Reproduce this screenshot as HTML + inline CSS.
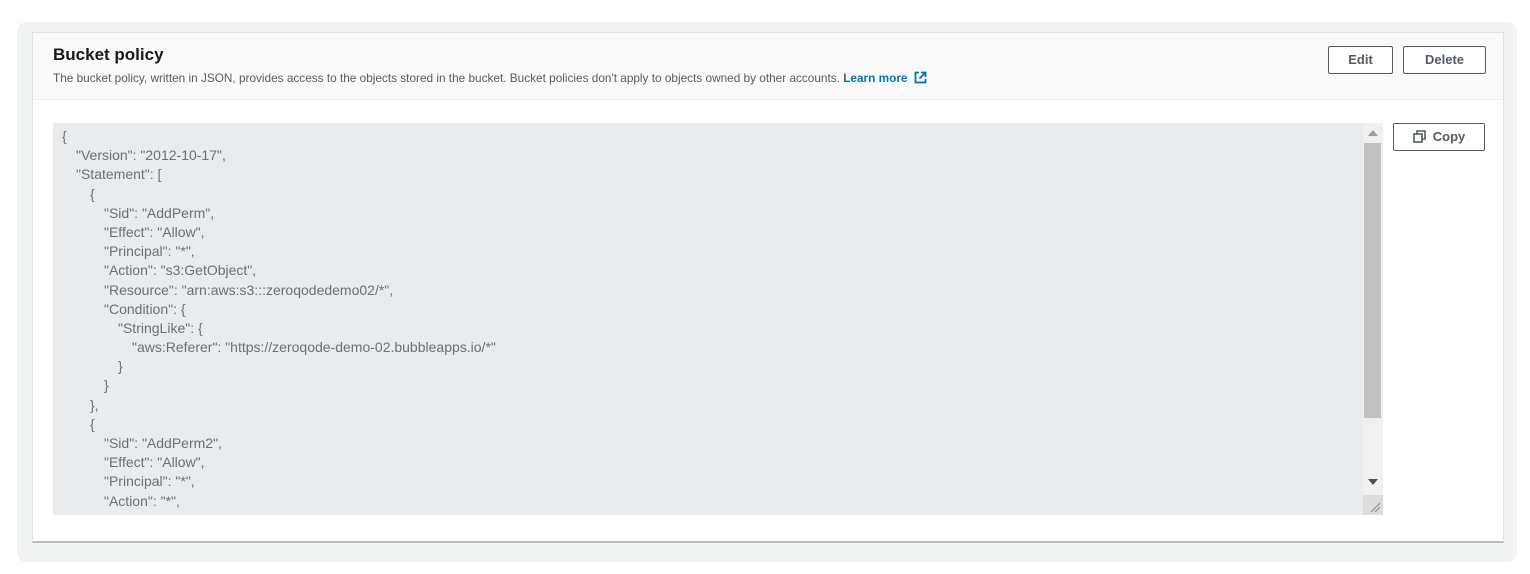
<!DOCTYPE html>
<html><head><style>
body{margin:0;width:1530px;height:574px;background:#fff;font-family:"Liberation Sans",sans-serif;position:relative;overflow:hidden}
.outer{position:absolute;left:17px;top:22px;width:1500px;height:540px;background:#f2f3f3;border-radius:10px}
.card{position:absolute;left:32px;top:32px;width:1472px;height:511px;background:#fff;border:1px solid #dfe1e2;border-bottom:2px solid #b8bcbf;box-sizing:border-box}
.hdr{position:absolute;left:0;top:0;right:0;height:66px;background:#fafafa;border-bottom:1px solid #eaeded}
h2{position:absolute;left:20px;top:12px;margin:0;font-size:17px;font-weight:bold;color:#16191f}
.desc{position:absolute;left:20px;top:38px;font-size:11.8px;color:#545b64;white-space:nowrap}
.desc b{color:#0073bb}
.btn{position:absolute;height:28px;border:1px solid #545b64;border-radius:2px;box-sizing:border-box;font-size:13px;font-weight:bold;color:#545b64;text-align:center;line-height:26px;background:#fff}
.ta{position:absolute;left:20px;top:90px;width:1310px;height:392px;background:#e9ebed;overflow:hidden}
.code{position:absolute;left:9px;top:4px;font-size:14px;color:#687078;line-height:19.2px;white-space:pre}
.code div{height:19.2px}
.l1{padding-left:14px}.l2{padding-left:28px}.l3{padding-left:42px}.l4{padding-left:56px}.l5{padding-left:70px}
.sb{position:absolute;left:1330px;top:90px;width:20px;height:392px;background:#f0f0f0}
.thumb{position:absolute;left:1px;top:20px;width:17px;height:275px;background:#c1c1c1}
</style></head><body>
<div class="outer"></div>
<div class="card">
 <div class="hdr">
  <h2>Bucket policy</h2>
  <div class="desc">The bucket policy, written in JSON, provides access to the objects stored in the bucket. Bucket policies don't apply to objects owned by other accounts. <b>Learn more</b> <svg width="13" height="13" viewBox="0 0 13 13" style="vertical-align:-2px;margin-left:3px"><path d="M5 1.5H1.5v10h10V8M7 1.5h4.5V6M11.5 1.5L5.5 7.5" stroke="#0073bb" stroke-width="1.8" fill="none"/></svg></div>
  <div class="btn" style="left:1295px;top:13px;width:65px">Edit</div>
  <div class="btn" style="left:1370px;top:13px;width:83px">Delete</div>
 </div>
 <div class="ta"><div class="code"><div>{</div><div class="l1">"Version": "2012-10-17",</div><div class="l1">"Statement": [</div><div class="l2">{</div><div class="l3">"Sid": "AddPerm",</div><div class="l3">"Effect": "Allow",</div><div class="l3">"Principal": "*",</div><div class="l3">"Action": "s3:GetObject",</div><div class="l3">"Resource": "arn:aws:s3:::zeroqodedemo02/*",</div><div class="l3">"Condition": {</div><div class="l4">"StringLike": {</div><div class="l5">"aws:Referer": "https://zeroqode-demo-02.bubbleapps.io/*"</div><div class="l4">}</div><div class="l3">}</div><div class="l2">},</div><div class="l2">{</div><div class="l3">"Sid": "AddPerm2",</div><div class="l3">"Effect": "Allow",</div><div class="l3">"Principal": "*",</div><div class="l3">"Action": "*",</div></div></div>
 <div class="sb"><div class="thumb"></div>
  <svg style="position:absolute;left:5px;top:7px" width="10" height="6"><path d="M0 6L5 0L10 6Z" fill="#a0a0a0"/></svg>
  <svg style="position:absolute;left:5px;top:356px" width="10" height="6"><path d="M0 0L5 6L10 0Z" fill="#505050"/></svg>
  <div style="position:absolute;left:0;top:372px;width:20px;height:20px;background:#dcdcdc"></div>
  <svg style="position:absolute;left:6px;top:378px" width="12" height="12"><path d="M2 11L11 2M6 11L11 6" stroke="#888" stroke-width="1"/></svg>
 </div>
 <div class="btn" style="left:1360px;top:90px;width:92px"><svg width="13" height="13" viewBox="0 0 13 13" style="vertical-align:-2px;margin-right:7px"><rect x="1" y="4" width="8" height="8" fill="none" stroke="#545b64" stroke-width="1.6"/><path d="M4 4V1h8v8H9" fill="none" stroke="#545b64" stroke-width="1.6"/></svg>Copy</div>
</div>
</body></html>
